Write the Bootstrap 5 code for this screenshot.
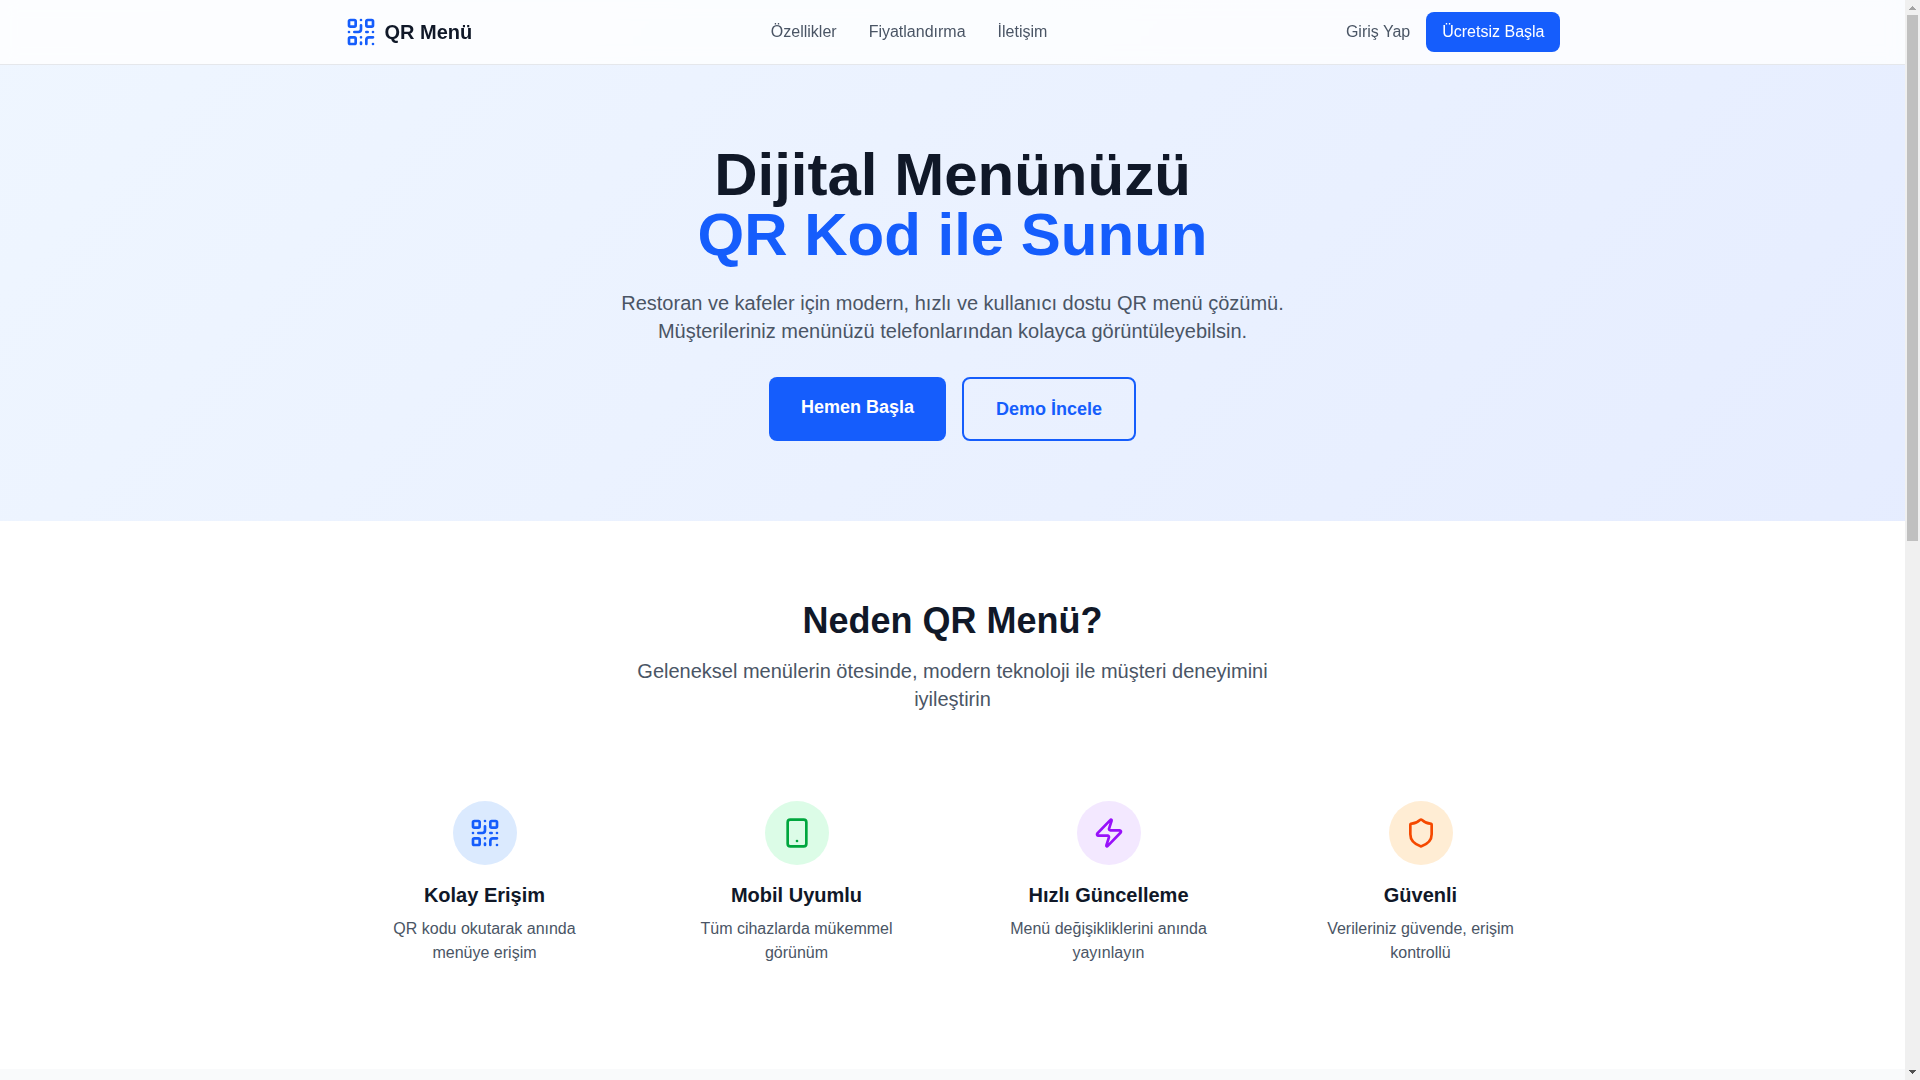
<!DOCTYPE html>
<html lang="tr">
<head>
<meta charset="utf-8">
<meta name="viewport" content="width=device-width, initial-scale=1">
<title>QR Menü</title>
<link href="https://cdn.jsdelivr.net/npm/bootstrap@5.3.0/dist/css/bootstrap.min.css" rel="stylesheet">
<style>
  :root { --ink: #101828; --muted: #4a5565; --brand: #155dfc; }
  body {
    font-family: "Liberation Sans", Arial, sans-serif;
    font-size: 16px; line-height: 24px; color: var(--ink);
  }
  a { text-decoration: none; }
  .scroll-view { min-width: 0; overflow-y: auto; scrollbar-width: none; }
  .page-sheet { background: linear-gradient(to bottom right, #eff6ff, #e0e7ff); }
  .page-width { max-width: 1280px; padding-inline: 32px; }
  .site-header { background: rgba(255, 255, 255, .8); border-bottom: 1px solid #e5e7eb; backdrop-filter: blur(8px); }
  .site-header .page-width { min-height: 64px; }
  .brand-name { font-size: 20px; line-height: 28px; color: var(--ink); }
  .brand-icon, .text-brand { color: var(--brand); }
  .main-links { gap: 32px; }
  .quiet-link { color: var(--muted); }
  .quiet-link:hover { color: var(--ink); }
  .cta { background: var(--brand); color: #fff; border-radius: 8px; padding: 8px 16px; }
  .cta:hover { background: #1447e6; color: #fff; }
  .cta-large { font-size: 18px; line-height: 28px; font-weight: 600; padding: 16px 32px; border-radius: 8px; }
  .cta-outline { color: var(--brand); border: 2px solid var(--brand); }
  .cta-outline:hover { background: var(--brand); color: #fff; }
  .band { padding-block: 80px; }
  .hero-title { font-size: 60px; line-height: 60px; margin-bottom: 24px; }
  .intro { font-size: 20px; line-height: 28px; color: var(--muted); max-width: 672px; }
  .hero-intro { margin-bottom: 32px; }
  .section-title { font-size: 36px; line-height: 40px; margin-bottom: 16px; }
  .features-intro { margin-bottom: 64px; }
  .feature-row { --bs-gutter-x: 32px; --bs-gutter-y: 32px; }
  .feature-title { font-size: 20px; line-height: 28px; font-weight: 600; margin-bottom: 8px; }
  .feature-item { padding: 24px; }
  .feature-item p { color: var(--muted); }
  .feature-icon { width: 64px; height: 64px; margin-bottom: 16px; }
  .tone-blue { background: #dbeafe; color: #155dfc; }
  .tone-green { background: #dcfce7; color: #00a63e; }
  .tone-purple { background: #f3e8ff; color: #9810fa; }
  .tone-orange { background: #ffedd4; color: #f54900; }
  .stroke-icon { width: 32px; height: 32px; fill: none; stroke: currentColor; stroke-width: 2; stroke-linecap: round; stroke-linejoin: round; }
  .pricing-band { background: #f9fafb; min-height: 1087px; }
  .side-track { width: 15px; background: #f0f0f0; }
  .side-track svg { width: 15px; height: 15px; display: block; }
  .side-thumb { width: 11px; height: 50.1%; background: #c0c0c0; }
</style>
</head>
<body class="vh-100 d-flex overflow-hidden">
<svg class="d-none" aria-hidden="true">
  <symbol id="icon-qr" viewBox="0 0 24 24">
    <rect width="5" height="5" x="3" y="3" rx="1"/><rect width="5" height="5" x="16" y="3" rx="1"/><rect width="5" height="5" x="3" y="16" rx="1"/>
    <path d="M21 16h-3a2 2 0 0 0-2 2v3M21 21v.01M12 7v3a2 2 0 0 1-2 2H7M3 12h.01M12 3h.01M12 16v.01M16 12h1M21 12v.01M12 21v-1"/>
  </symbol>
</svg>

<div class="scroll-view flex-fill">
<div class="page-sheet">
<header class="site-header sticky-top">
  <nav class="page-width mx-auto d-flex align-items-center justify-content-between">
    <a href="#" class="d-flex align-items-center gap-2">
      <svg class="stroke-icon brand-icon" aria-hidden="true"><use href="#icon-qr"/></svg>
      <span class="brand-name fw-bold">QR Menü</span>
    </a>
    <div class="main-links d-none d-md-flex">
      <a class="quiet-link" href="#ozellikler">Özellikler</a>
      <a class="quiet-link" href="#fiyatlandirma">Fiyatlandırma</a>
      <a class="quiet-link" href="#iletisim">İletişim</a>
    </div>
    <div class="d-flex align-items-center gap-3">
      <a class="quiet-link" href="#giris">Giriş Yap</a>
      <a class="cta" href="#kayit">Ücretsiz Başla</a>
    </div>
  </nav>
</header>

<main>
  <section class="band">
    <div class="page-width mx-auto text-center">
      <h1 class="hero-title fw-bold">Dijital Menünüzü <span class="text-brand d-block">QR Kod ile Sunun</span></h1>
      <p class="intro hero-intro mx-auto">Restoran ve kafeler için modern, hızlı ve kullanıcı dostu QR menü çözümü. Müşterileriniz menünüzü telefonlarından kolayca görüntüleyebilsin.</p>
      <div class="d-flex flex-column flex-sm-row justify-content-center gap-3">
        <a class="cta cta-large" href="#kayit">Hemen Başla</a>
        <a class="cta-large cta-outline" href="#demo">Demo İncele</a>
      </div>
    </div>
  </section>

  <section class="band bg-white" id="ozellikler">
    <div class="page-width mx-auto text-center">
      <h2 class="section-title fw-bold">Neden QR Menü?</h2>
      <p class="intro features-intro mx-auto">Geleneksel menülerin ötesinde, modern teknoloji ile müşteri deneyimini iyileştirin</p>
      <div class="row feature-row row-cols-1 row-cols-md-2 row-cols-lg-4">
        <div class="col">
          <div class="feature-item">
            <div class="feature-icon tone-blue rounded-circle mx-auto d-flex align-items-center justify-content-center">
              <svg class="stroke-icon" aria-hidden="true"><use href="#icon-qr"/></svg>
            </div>
            <h3 class="feature-title">Kolay Erişim</h3>
            <p class="mb-0">QR kodu okutarak anında menüye erişim</p>
          </div>
        </div>
        <div class="col">
          <div class="feature-item">
            <div class="feature-icon tone-green rounded-circle mx-auto d-flex align-items-center justify-content-center">
              <svg class="stroke-icon" viewBox="0 0 24 24" aria-hidden="true"><rect width="14" height="20" x="5" y="2" rx="2"/><path d="M12 18h.01"/></svg>
            </div>
            <h3 class="feature-title">Mobil Uyumlu</h3>
            <p class="mb-0">Tüm cihazlarda mükemmel görünüm</p>
          </div>
        </div>
        <div class="col">
          <div class="feature-item">
            <div class="feature-icon tone-purple rounded-circle mx-auto d-flex align-items-center justify-content-center">
              <svg class="stroke-icon" viewBox="0 0 24 24" aria-hidden="true"><path d="M4 14a1 1 0 0 1-.78-1.63l9.9-10.2a.5.5 0 0 1 .86.46l-1.92 6.02A1 1 0 0 0 13 10h7a1 1 0 0 1 .78 1.63l-9.9 10.2a.5.5 0 0 1-.86-.46l1.92-6.02A1 1 0 0 0 11 14z"/></svg>
            </div>
            <h3 class="feature-title">Hızlı Güncelleme</h3>
            <p class="mb-0">Menü değişikliklerini anında yayınlayın</p>
          </div>
        </div>
        <div class="col">
          <div class="feature-item">
            <div class="feature-icon tone-orange rounded-circle mx-auto d-flex align-items-center justify-content-center">
              <svg class="stroke-icon" viewBox="0 0 24 24" aria-hidden="true"><path d="M20 13c0 5-3.5 7.5-7.66 8.95a1 1 0 0 1-.67-.01C7.5 20.5 4 18 4 13V6a1 1 0 0 1 1-1c2 0 4.5-1.2 6.24-2.72a1.17 1.17 0 0 1 1.52 0C14.51 3.81 17 5 19 5a1 1 0 0 1 1 1z"/></svg>
            </div>
            <h3 class="feature-title">Güvenli</h3>
            <p class="mb-0">Verileriniz güvende, erişim kontrollü</p>
          </div>
        </div>
      </div>
    </div>
  </section>

  <section class="pricing-band" id="fiyatlandirma"></section>
</main>
</div>
</div>

<div class="side-track d-flex flex-column flex-shrink-0" aria-hidden="true">
  <svg viewBox="0 0 15 15" class="flex-shrink-0" shape-rendering="crispEdges"><path fill="#a3a3a3" d="M7 6h1v1h1v1h1v1h1v1H4V9h1V8h1V7h1z"/></svg>
  <div class="flex-fill d-flex justify-content-center overflow-hidden"><div class="side-thumb"></div></div>
  <svg viewBox="0 0 15 15" class="flex-shrink-0" shape-rendering="crispEdges"><path fill="#505050" d="M4 5h7v1h-1v1H9v1H8v1H7V8H6V7H5V6H4z"/></svg>
</div>
<script src="https://cdn.jsdelivr.net/npm/bootstrap@5.3.0/dist/js/bootstrap.bundle.min.js"></script>
</body>
</html>
